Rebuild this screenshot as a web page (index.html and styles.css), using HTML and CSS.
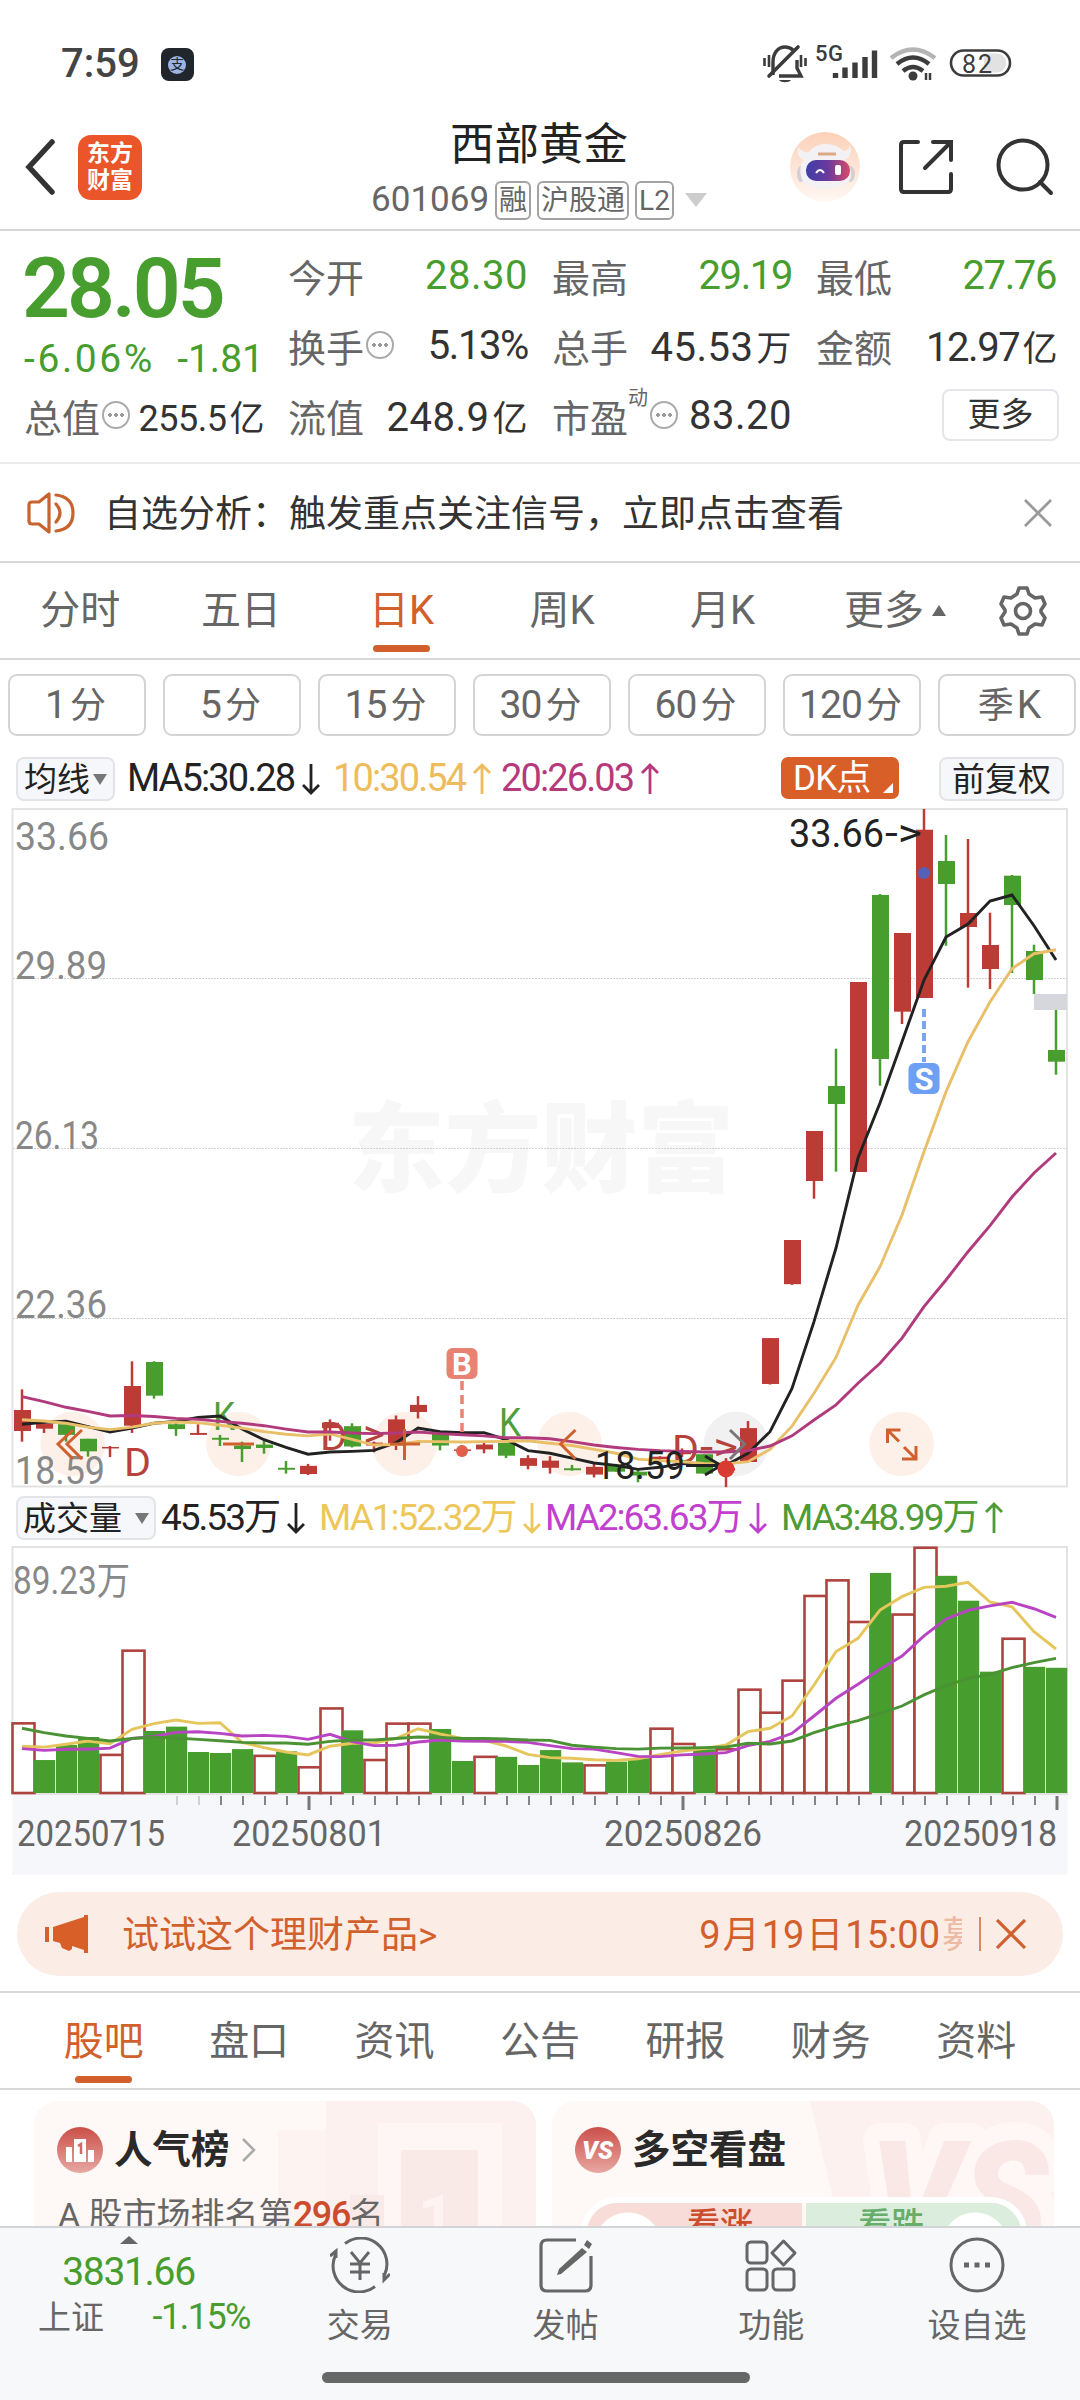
FILE: index.html
```
<!DOCTYPE html>
<html lang="zh-CN">

<head>
  <meta charset="UTF-8">
  <meta name="viewport" content="width=device-width, initial-scale=1.0">
  <title>西部黄金 601069</title>
  <link rel="stylesheet" href="styles.css">
</head>

<body>
  <div class="status-bar">
    <span class="time">7:59</span>
    <span class="status-app"><i>支</i></span>
    <svg class="status-icons" width="256" height="44" viewBox="760 42 256 44" fill="none" stroke="#3c3c3c">
      <path d="M773 75V62c0-9 5-15 12-15 3 0 6 1 8 3M797 60v8l4 8h-22" stroke-width="3.4" />
      <path d="M769 76L798 47" stroke-width="3.6" stroke-linecap="round" />
      <path d="M764.500 58v8M769 55v12M801 55v12M805.500 58v8" stroke-width="2.600" />
      <path d="M779 80h12c-2 3-10 3-12 0z" fill="#3c3c3c" stroke="none" />
      <text x="815" y="61" font-size="22" font-weight="500" fill="#3c3c3c" stroke="none" textLength="28">5G</text>
      <path d="M835.500 73v5M845 67.500v10.500M855 62.500v15.500M865 57v21M874.500 50.500v27.500" stroke-width="5.400" />
      <path d="M891 58q22-17 44 0" stroke="#b4b4b4" stroke-width="4.500" />
      <path d="M897 64q16-13 32 0M903 71q10-8 20 0" stroke-width="4.500" />
      <circle cx="913" cy="76" r="4.500" fill="#3c3c3c" stroke="none" />
      <path d="M926 73v7M930 73v7" stroke-width="2.500" />
      <rect x="951" y="50.500" width="59" height="25" rx="12.500" stroke-width="2.600" />
      <path d="M984 53.500h13c12 0 12 19 0 19h-13z" fill="#e2e2e2" stroke="none" />
      <text x="962" y="72.500" font-size="25" fill="#3c3c3c" stroke="none" textLength="30">82</text>
    </svg>
  </div>

  <header class="header">
    <svg class="back" width="34" height="56" viewBox="0 0 34 56" fill="none" stroke="#333" stroke-width="5.500">
      <path d="M29 3L6 28L29 53" stroke-linecap="round" />
    </svg>
    <div class="logo">东方<br>财富</div>
    <div class="heading">
      <h1>西部黄金</h1>
      <div class="code">
        <span class="num">601069</span>
        <span class="tag">融</span>
        <span class="tag">沪股通</span>
        <span class="tag">L2</span>
        <span class="caret"></span>
      </div>
    </div>
    <svg class="robot" width="70" height="70" viewBox="0 0 70 70">
      <defs>
        <linearGradient id="halo" x1="0" y1="0" x2="0" y2="1">
          <stop offset="0" stop-color="#fbd1b8" />
          <stop offset="1" stop-color="#fff8f3" />
        </linearGradient>
        <linearGradient id="visor">
          <stop offset="0" stop-color="#3d3fa8" />
          <stop offset=".5" stop-color="#6a3a9c" />
          <stop offset="1" stop-color="#d84b68" />
        </linearGradient>
      </defs>
      <circle cx="35" cy="35" r="35" fill="url(#halo)" />
      <ellipse cx="11" cy="42" rx="4" ry="8" fill="#d3cfd4" />
      <ellipse cx="60" cy="42" rx="5" ry="8" fill="#d3cfd4" />
      <path d="M13 28q-7-4-5-13 4 6 11 5 6-8 17-8t17 7q6 0 7-6 4 9-5 15 7 8 6 16-2 13-25 13T11 44q-2-8 2-16z" fill="#f3f1f3" />
      <rect x="16" y="28" width="44" height="21" rx="10" fill="url(#visor)" />
      <path d="M28 22h18" stroke="#dba984" stroke-width="3" />
      <path d="M26 41q4-6 8 0" fill="none" stroke="#fff" stroke-width="2" />
      <rect x="45" y="33" width="6" height="10" rx="2" fill="#fff" />
    </svg>
    <svg class="share" width="56" height="56" viewBox="0 0 56 56" fill="none" stroke="#333" stroke-width="4" stroke-linecap="round">
      <path d="M20 3H6q-3 0-3 3v44q0 3 3 3h44q3 0 3-3V35M35 3h18v18M53 3L27 29" />
    </svg>
    <svg class="search" width="58" height="58" viewBox="0 0 58 58" fill="none" stroke="#333" stroke-width="4">
      <circle cx="27" cy="27" r="24.500" />
      <path d="M44 44l11 11" stroke-linecap="round" />
    </svg>
  </header>

  <section class="quote">
    <div class="col">
      <div class="price">28.05</div>
      <div class="change"><span class="percent">-6.06%</span><span>-1.81</span></div>
      <div class="cell small"><label>总值<i class="more-dot"></i></label><b>255.5<em>亿</em></b></div>
    </div>
    <div class="col">
      <div class="cell down"><label>今开</label><b>28.30</b></div>
      <div class="cell"><label>换手<i class="more-dot"></i></label><b class="tight">5.13%</b></div>
      <div class="cell"><label>流值</label><b>248.9<em>亿</em></b></div>
    </div>
    <div class="col">
      <div class="cell down"><label>最高</label><b class="tight">29.19</b></div>
      <div class="cell"><label>总手</label><b>45.53<em>万</em></b></div>
      <div class="cell"><label>市盈<sup>动</sup><i class="more-dot"></i></label><b>83.20</b></div>
    </div>
    <div class="col">
      <div class="cell down"><label>最低</label><b class="tight">27.76</b></div>
      <div class="cell"><label>金额</label><b class="tight">12.97<em>亿</em></b></div>
      <div class="cell end"><button class="more-btn">更多</button></div>
    </div>
  </section>

  <section class="notice">
    <svg width="48" height="44" viewBox="0 0 48 44" fill="none" stroke="#c9622f" stroke-width="3.200">
      <path d="M22 3v38L12 33H5q-3 0-3-3V14q0-3 3-3h7L22 3z" stroke-linejoin="round" />
      <path d="M29 13q8 9 0 18M29 4q17 2 17 18T29 40" stroke-linecap="round" />
    </svg>
    <p>自选分析：触发重点关注信号，立即点击查看</p>
    <svg width="28" height="28" viewBox="0 0 28 28" stroke="#999" stroke-width="2.800">
      <path d="M1 1l26 26M27 1L1 27" />
    </svg>
  </section>

  <nav class="period">
    <a>分时</a>
    <a>五日</a>
    <a class="active">日K</a>
    <a>周K</a>
    <a>月K</a>
    <a class="wide">更多<i class="up"></i></a>
    <svg class="gear" width="48" height="50" viewBox="0 0 48 50" fill="none" stroke="#666" stroke-width="3.600" stroke-linejoin="round">
      <path d="M20 2h8l2 6 6 4 7-1 3 7-4 6v2l4 6-3 7-7-1-6 4-2 6h-8l-2-6-6-4-7 1-3-7 4-6v-2l-4-6 3-7 7 1 6-4z" />
      <circle cx="24" cy="25" r="7.500" />
    </svg>
  </nav>

  <div class="minutes">
    <button>1<span>分</span></button>
    <button>5<span>分</span></button>
    <button>15<span>分</span></button>
    <button>30<span>分</span></button>
    <button>60<span>分</span></button>
    <button>120<span>分</span></button>
    <button><span>季</span>K</button>
  </div>

  <div class="legend">
    <span class="chip ma-chip">均线<i class="tri"></i></span>
    <span class="ma5">MA5:30.28<svg class="arrow" viewBox="0 0 20 32"><path d="M10 1v29M2 22l8 8 8-8" /></svg></span>
    <span class="ma10">10:30.54<svg class="arrow" viewBox="0 0 20 32"><path d="M10 31V2M2 10l8-8 8 8" /></svg></span>
    <span class="ma20">20:26.03<svg class="arrow" viewBox="0 0 20 32"><path d="M10 31V2M2 10l8-8 8 8" /></svg></span>
    <span class="dk">DK点<i></i></span>
    <span class="chip adjust">前复权</span>
  </div>

  <svg class="chart" id="kline" width="1080" height="687" viewBox="0 808 1080 687"></svg>

  <div class="legend volume-legend">
    <span class="chip vol-chip">成交量<i class="tri"></i></span>
    <span class="vol0">45.53万<svg class="arrow" viewBox="0 0 20 32"><path d="M10 1v29M2 22l8 8 8-8" /></svg></span>
    <span class="vol1">MA1:52.32万<svg class="arrow" viewBox="0 0 20 32"><path d="M10 1v29M2 22l8 8 8-8" /></svg></span>
    <span class="vol2">MA2:63.63万<svg class="arrow" viewBox="0 0 20 32"><path d="M10 1v29M2 22l8 8 8-8" /></svg></span>
    <span class="vol3">MA3:48.99万<svg class="arrow" viewBox="0 0 20 32"><path d="M10 31V2M2 10l8-8 8 8" /></svg></span>
  </div>

  <svg class="chart" id="volume" width="1080" height="329" viewBox="0 1546 1080 329"></svg>

  <div class="banner">
    <svg width="44" height="38" viewBox="0 0 44 38" fill="#d95f28">
      <path d="M0 12h4v15H0zM8 12L39 2V0h4v38h-4v-3L27 31v3l-3 2-7-3-2-5-7-2z" />
    </svg>
    <span class="product">试试这个理财产品&gt;</span>
    <span class="deadline"><b>9</b>月<b>19</b>日<b>15:00</b><span class="fade">募</span></span>
    <i class="sep"></i>
    <svg width="30" height="30" viewBox="0 0 30 30" stroke="#d0602e" stroke-width="3.200">
      <path d="M1 1l28 28M29 1L1 29" />
    </svg>
  </div>

  <nav class="tabs">
    <a class="active">股吧</a>
    <a>盘口</a>
    <a>资讯</a>
    <a>公告</a>
    <a>研报</a>
    <a>财务</a>
    <a>资料</a>
  </nav>

  <section class="cards">
    <div class="card">
      <svg class="card-art" width="502" height="136" viewBox="0 0 502 136">
        <path d="M244 29h48v107h-48z" fill="#fdf4f2" />
        <path d="M292 0h210v136H292z" fill="#fcf1ef" />
        <path d="M344 22h124v114H344z" fill="#fdf6f4" />
        <path d="M367 49h77v87h-77z" fill="#f9e9e7" />
        <path d="M316 94h34v42h-34z" fill="#f9e9e7" />
        <text x="384" y="140" font-size="64" font-weight="700" fill="#fdf4f2">1</text>
      </svg>
      <h3>
        <svg width="46" height="46" viewBox="0 0 46 46">
          <defs>
            <linearGradient id="badge" x1="0" y1="0" x2="0" y2="1">
              <stop offset="0" stop-color="#cb4f49" />
              <stop offset="1" stop-color="#e8a7a2" />
            </linearGradient>
          </defs>
          <circle cx="23" cy="23" r="23" fill="url(#badge)" />
          <path d="M9 20h6v15H9zM17 12h12v23H17zM31 23h6v12h-6z" fill="#fff" />
          <path d="M21 19l3-2v10" fill="none" stroke="#d46a64" stroke-width="2.500" />
        </svg>
        人气榜
        <svg width="16" height="24" viewBox="0 0 16 24" fill="none" stroke="#aaa" stroke-width="2.500"><path d="M2 1l11 11L2 23" /></svg>
      </h3>
      <p class="rank">A<span> 股市场排名第</span><b>296</b>名</p>
    </div>
    <div class="card">
      <svg class="card-art" width="502" height="136" viewBox="0 0 502 136">
        <path d="M258 0h244v136H290z" fill="#fcf1ef" />
        <text x="318" y="152" font-size="158" font-weight="900" font-style="italic" fill="#f9e8e6" stroke="#fef7f5" stroke-width="36" stroke-linejoin="round" paint-order="stroke" textLength="178" lengthAdjust="spacingAndGlyphs">VS</text>
      </svg>
      <h3>
        <svg width="46" height="46" viewBox="0 0 46 46">
          <circle cx="23" cy="23" r="23" fill="url(#badge)" />
          <text x="7" y="32" font-size="25" font-weight="900" font-style="italic" fill="#fff" textLength="31" lengthAdjust="spacingAndGlyphs">VS</text>
        </svg>
        多空看盘
      </h3>
      <div class="vote">
        <div class="rise">看涨</div>
        <div class="fall">看跌</div>
      </div>
    </div>
  </section>

  <footer class="bottom">
    <div class="items">
      <div class="index">
        <i class="up"></i>
        <div class="points">3831.66</div>
        <div class="row"><span>上证</span><span class="pct">-1.15%</span></div>
      </div>
      <div class="item">
        <svg viewBox="0 0 60 56" fill="none" stroke="#666" stroke-width="3">
          <path d="M15 6.500A26 26 0 0 1 54.500 38M45 49.500A26 26 0 0 1 5.500 18M0 19l6-5v7M60 37l-6 6v-7" />
          <path d="M21 15l9 11 9-11M30 26v17M20 27h20M20 35h20" />
        </svg>
        交易
      </div>
      <div class="item">
        <svg viewBox="0 0 60 56" fill="none" stroke="#666" stroke-width="3.200">
          <path d="M40 3H11q-6 0-6 6v39q0 6 6 6h38q6 0 6-6V19" />
          <path d="M51 3l5 4-3 5-5-4zM46 11l5 4-26 22-4 1 2-6z" fill="#666" stroke="none" />
        </svg>
        发帖
      </div>
      <div class="item">
        <svg viewBox="0 0 60 56" fill="none" stroke="#666" stroke-width="3">
          <rect x="6" y="5" width="20" height="21" rx="4" />
          <rect x="6" y="32" width="20" height="21" rx="4" />
          <rect x="32" y="32" width="21" height="21" rx="4" />
          <path d="M42.500 4L54 16 42.500 28 31 16z" stroke-linejoin="round" />
        </svg>
        功能
      </div>
      <div class="item">
        <svg viewBox="0 0 60 56" fill="none" stroke="#666" stroke-width="3">
          <circle cx="30" cy="28" r="26" />
          <path d="M17 28h5M27.500 28h5M38 28h5" stroke-width="5" />
        </svg>
        设自选
      </div>
    </div>
    <div class="home-bar"></div>
  </footer>

  <script src="chart.js"></script>
</body>

</html>
```

FILE: styles.css
```
:root {
  --green: #479d2d;
  --red: #bd3b35;
  --orange: #d2602c;
  --text: #333;
  --gray: #666;
}

* {
  box-sizing: border-box;
}

body {
  margin: 0;
  width: 1080px;
  height: 2400px;
  overflow: hidden;
  display: flex;
  flex-direction: column;
  font-family: Roboto, "Noto Sans CJK SC", sans-serif;
  color: var(--text);
  background: #fff;
}

body > * {
  flex-shrink: 0;
}

i, em {
  font-style: normal;
}

button {
  font-family: inherit;
  padding: 0;
  background: #fff;
}

.status-bar {
  height: 118px;
  padding: 42px 64px 0 61px;
  display: flex;
  align-items: flex-start;
}

.time {
  font-size: 40px;
  line-height: 44px;
  font-weight: 500;
  color: #444;
}

.status-app {
  width: 33px;
  height: 33px;
  margin: 6px 0 0 21px;
  border-radius: 8px;
  background: #20262b;
  display: flex;
  align-items: center;
  justify-content: center;
}

.status-app i {
  width: 18px;
  height: 18px;
  border-radius: 50%;
  background: #9cb4e4;
  color: #20262b;
  font-size: 14px;
  line-height: 17px;
  text-align: center;
}

.status-icons {
  margin-left: auto;
}

.header {
  height: 113px;
  padding: 0 26px 0 23px;
  border-bottom: 2px solid #d6d6d6;
  display: flex;
  align-items: flex-start;
}

.back {
  margin-top: 21px;
}

.logo {
  width: 64px;
  height: 65px;
  margin: 17px 0 0 21px;
  padding-top: 5px;
  border-radius: 13px;
  background: #ea5529;
  color: #fff;
  font-size: 23px;
  line-height: 27px;
  font-weight: 700;
  text-align: center;
}

.heading {
  flex: 1;
  padding-left: 146px;
  display: flex;
  flex-direction: column;
  align-items: center;
}

.heading h1 {
  margin: 0;
  font-size: 44.5px;
  line-height: 54px;
  font-weight: 400;
  color: #222;
}

.code {
  display: flex;
  align-items: center;
  gap: 6px;
  margin-top: 8px;
  font-size: 35px;
  line-height: 40px;
  color: var(--gray);
}

.tag {
  height: 39px;
  padding: 0 2px;
  border: 2px solid #a2a2a2;
  border-radius: 6px;
  font-size: 28px;
  line-height: 35px;
}

.caret {
  margin-left: 5px;
  border: 11px solid transparent;
  border-top: 14px solid #ccc;
  border-bottom: 0;
}

.robot {
  margin-top: 14px;
}

.share {
  margin: 21px 0 0 38px;
}

.search {
  margin: 20px 0 0 42px;
}

.quote {
  height: 233px;
  padding: 9px 24px 0;
  border-bottom: 2px solid #ececec;
  display: grid;
  grid-template-columns: repeat(4, 240px);
  gap: 24px;
}

.price {
  height: 92px;
  line-height: 97px;
  margin-left: -2px;
  font-size: 84px;
  font-weight: 600;
  letter-spacing: -3px;
  color: var(--green);
}

.change {
  height: 48px;
  line-height: 55px;
  font-size: 39px;
  display: flex;
  justify-content: space-between;
  color: var(--green);
}

.percent {
  letter-spacing: 2.6px;
}

.cell {
  height: 70px;
  display: flex;
  align-items: center;
  justify-content: space-between;
  font-size: 40px;
  white-space: nowrap;
}

.cell label {
  display: flex;
  align-items: center;
  font-size: 38px;
  color: var(--gray);
}

.cell b {
  font-weight: 400;
  letter-spacing: 0.5px;
}

.cell b.tight {
  letter-spacing: -1.4px;
}

.cell em {
  margin-left: 3px;
  font-size: 35px;
}

.cell.small b {
  font-size: 36px;
  letter-spacing: -0.5px;
}

.cell.down b {
  color: var(--green);
}

.cell.end {
  justify-content: flex-end;
}

.cell sup {
  align-self: flex-start;
  font-size: 20px;
  line-height: 20px;
}

.more-dot {
  width: 28px;
  height: 28px;
  margin-left: 2px;
  border: 2px solid #aaa;
  border-radius: 50%;
  background: radial-gradient(circle, #999 1.6px, transparent 2px) center / 6px 24px no-repeat,
    radial-gradient(circle, #999 1.6px, transparent 2px) 3px center / 6px 24px no-repeat,
    radial-gradient(circle, #999 1.6px, transparent 2px) 15px center / 6px 24px no-repeat;
}

.more-btn {
  width: 117px;
  height: 52px;
  margin-right: -3px;
  border: 2px solid #e4e6ea;
  border-radius: 8px;
  font-size: 33px;
  line-height: 46px;
  color: var(--text);
}

.notice {
  height: 99px;
  padding: 0 28px 0 27px;
  border-bottom: 2px solid #d8d8d8;
  display: flex;
  align-items: center;
}

.notice p {
  flex: 1;
  margin: 0 0 4px 29px;
  font-size: 37px;
}

.period {
  height: 97px;
  border-bottom: 2px solid #d8d8d8;
  display: flex;
  align-items: center;
  font-size: 40px;
  color: var(--gray);
}

.period a {
  width: 160.6px;
  height: 95px;
  line-height: 96px;
  text-align: center;
  display: flex;
  flex-direction: column;
  align-items: center;
}

.period a.wide {
  width: 184px;
  flex-direction: row;
  justify-content: center;
  gap: 8px;
}

.gear {
  margin-left: 12px;
}

.period a.active,
.tabs a.active {
  color: var(--orange);
}

.period a.active::after,
.tabs a.active::after {
  content: "";
  width: 57px;
  height: 7px;
  margin-top: -14px;
  border-radius: 4px;
  background: var(--orange);
}

.up {
  border: 7px solid transparent;
  border-bottom: 11px solid #666;
  border-top: 0;
}

.minutes {
  padding: 14px 5px 0 8px;
  height: 96px;
  display: grid;
  grid-template-columns: repeat(7, 138px);
  column-gap: 17px;
}

.minutes button {
  height: 62px;
  border: 2px solid #d4d4d4;
  border-radius: 9px;
  font-size: 39px;
  line-height: 56px;
  letter-spacing: -1px;
  color: var(--gray);
}

.minutes span {
  margin: 0 4px;
  font-size: 36px;
}

.legend {
  height: 52px;
  display: flex;
  align-items: flex-start;
  padding: 1px 16px 0;
  font-size: 38px;
  line-height: 43px;
  letter-spacing: -1.9px;
  white-space: nowrap;
}

.legend > span {
  display: flex;
  align-items: center;
}

.chip {
  height: 44px;
  border: 2px solid #e2e4e8;
  border-radius: 8px;
  background: #f6f7fa;
  color: #222;
  justify-content: center;
  font-size: 33px;
  line-height: 39px;
  letter-spacing: 0;
}

.tri {
  margin-left: 3px;
  border: 7px solid transparent;
  border-top: 11px solid #777;
  border-bottom: 0;
}

.arrow {
  flex-shrink: 0;
  width: 20px;
  height: 34px;
  margin-left: 7px;
  fill: none;
  stroke: currentColor;
  stroke-width: 2.8;
}

.ma-chip {
  width: 99px;
}

.ma5 {
  width: 206px;
  padding-left: 12px;
  color: #222;
}

.ma10 {
  width: 168px;
  padding-left: 12px;
  color: #edbc5c;
}

.ma20 {
  padding-left: 12px;
  color: #b6397c;
}

.dk {
  width: 118px;
  height: 42px;
  margin-left: auto;
  padding-left: 12px;
  border-radius: 7px;
  background: #d95f28;
  color: #fff;
  font-size: 35px;
  letter-spacing: -0.8px;
}

.dk i {
  align-self: flex-end;
  margin: 0 0 6px 12px;
  border: 5px solid #fff;
  border-top-color: transparent;
  border-left-color: transparent;
}

.adjust {
  width: 125px;
  margin-left: 40px;
}

.volume-legend {
  height: 51px;
  font-size: 37px;
  letter-spacing: -2px;
}

.volume-legend .chip {
  letter-spacing: 0;
}

.vol-chip {
  width: 140px;
}

.vol-chip .tri {
  margin-left: 13px;
}

.vol0 {
  width: 163px;
  padding-left: 5px;
  color: #222;
}

.vol1 {
  width: 226px;
  color: #edc75a;
}

.vol2 {
  width: 236px;
  color: #c140cf;
}

.vol3 {
  color: #4f9b35;
}

.chart {
  display: block;
}

.chart text {
  font-size: 38px;
}

.chart .scale {
  fill: #888;
}

.chart .date {
  font-size: 36px;
  fill: #666;
}

.chart .note {
  fill: #222;
}

.chart .watermark {
  font-size: 98px;
  font-weight: 900;
  fill: #f7f7f7;
}

.banner {
  height: 84px;
  margin: 17px 17px 15px;
  padding: 0 37px 0 28px;
  border-radius: 42px;
  background: #fbece5;
  color: var(--orange);
  display: flex;
  align-items: center;
  font-size: 37px;
}

.product {
  flex: 1;
  margin: 0 0 5px 33px;
}

.deadline {
  margin-bottom: 5px;
}

.deadline b {
  margin: 0 2px;
  font-size: 38px;
  font-weight: 400;
}

.fade {
  display: inline-block;
  width: 20px;
  overflow: hidden;
  vertical-align: bottom;
  opacity: 0.35;
}

.sep {
  width: 2px;
  height: 34px;
  margin: 0 15px 0 17px;
  background: #d98a64;
}

.tabs {
  height: 99px;
  padding: 0 31px;
  border-top: 2px solid #d8d8d8;
  border-bottom: 2px solid #d8d8d8;
  display: flex;
  font-size: 40px;
  color: var(--gray);
}

.tabs a {
  flex: 1;
  line-height: 97px;
  display: flex;
  flex-direction: column;
  align-items: center;
}

.cards {
  height: 136px;
  padding: 11px 26px 0 34px;
  overflow: hidden;
  display: grid;
  grid-template-columns: 502px 502px;
  gap: 16px;
}

.card {
  position: relative;
  height: 260px;
  padding: 25px 23px;
  border-radius: 24px;
  background: #fef8f6;
  overflow: hidden;
}

.card-art {
  position: absolute;
  top: 0;
  left: 0;
}

.card h3 {
  position: relative;
  margin: 0;
  height: 50px;
  display: flex;
  align-items: center;
  gap: 11px;
  font-size: 38.500px;
  line-height: 46px;
  padding-bottom: 2px;
  font-weight: 700;
  color: #2a2a2a;
}

.rank {
  position: relative;
  margin: 14px 0 0 1px;
  font-size: 34px;
  line-height: 50px;
  color: var(--gray);
}

.rank b {
  font-size: 36px;
  font-weight: 500;
  letter-spacing: -1.3px;
  color: #cc4d2d;
}

.vote {
  position: relative;
  height: 72px;
  margin: 21px 4px 0 6px;
  border: 6px solid #fff;
  border-radius: 36px;
  display: flex;
  gap: 4px;
  overflow: hidden;
  font-size: 33px;
  line-height: 44px;
  font-weight: 500;
}

.rise,
.fall {
  width: 217px;
  background: radial-gradient(circle at 41px 43px, #fff 33px, transparent 34px) #f8dcd8;
  padding-left: 100px;
  color: #cc4d2d;
}

.fall {
  padding-left: 52px;
  background: radial-gradient(circle at 169px 43px, #fff 33px, transparent 34px) #dbeedd;
  color: #67ad6c;
}

.bottom {
  height: 174px;
  border-top: 2px solid #d2d4d8;
  background: #f7f8fa;
}

.items {
  height: 144px;
  display: grid;
  grid-template-columns: 257px repeat(4, 205.7px);
}

.item {
  padding-top: 9px;
  display: flex;
  flex-direction: column;
  align-items: center;
  gap: 7px;
  font-size: 33px;
  line-height: 52px;
  color: var(--gray);
}

.item svg {
  width: 60px;
  height: 56px;
}

.index {
  display: flex;
  flex-direction: column;
  align-items: center;
  padding-top: 8px;
}

.index .up {
  border-width: 0 9px 8px;
}

.points {
  margin-top: 5px;
  font-size: 39px;
  line-height: 46px;
  letter-spacing: -1.3px;
  color: var(--green);
}

.row {
  width: 212px;
  margin-left: 31px;
  display: flex;
  justify-content: space-between;
  font-size: 33px;
  line-height: 45px;
  color: var(--gray);
}

.pct {
  font-size: 36px;
  letter-spacing: -1.5px;
  color: var(--green);
}

.home-bar {
  width: 428px;
  height: 11px;
  margin: 0 auto;
  transform: translateX(-4px);
  border-radius: 6px;
  background: #666867;
}
```

FILE: chart.js
```
const GREEN = '#479d2d';
const RED = '#bd3b35';
const X0 = 22;
const STEP = 22;

// [color, high, body top, body bottom, low]
const candles = [
  ['r', 1393, 1414.3, 1436, 1447], ['r', 1425, 1428.4, 1433.6, 1438], ['g', 1429, 1429, 1440, 1447],
  ['g', 1444, 1444, 1457, 1462.5], ['r', 1451.5, 1452.5, 1454, 1463], ['r', 1364, 1389.5, 1430.5, 1438],
  ['g', 1364, 1364.7, 1399.5, 1402.6], ['g', 1427, 1429, 1434, 1441], ['r', 1429, 1438, 1440, 1440],
  ['g', 1440, 1443, 1445, 1451.5], ['g', 1447, 1451, 1454.6, 1468], ['g', 1446, 1450, 1453.5, 1459.4],
  ['g', 1467, 1474, 1476, 1480], ['r', 1470, 1472, 1480.4, 1481.5], ['r', 1424, 1427.5, 1433, 1446],
  ['g', 1428, 1431, 1452, 1453], ['r', 1447, 1448, 1451, 1458], ['r', 1420, 1424, 1451, 1455.6],
  ['r', 1400, 1409, 1416.4, 1423], ['g', 1439, 1439, 1451, 1456], ['r', 1450.5, 1455, 1456.5, 1462.5],
  ['r', 1448, 1450, 1455, 1459], ['g', 1448, 1448.4, 1461.5, 1464], ['r', 1461, 1464, 1472, 1475.6],
  ['r', 1462, 1466.6, 1474, 1480], ['g', 1471, 1474.5, 1476.5, 1477], ['r', 1469, 1473, 1481, 1484],
  ['g', 1470, 1470.5, 1478, 1478], ['g', 1475, 1478, 1482, 1489], ['r', 1462, 1462.5, 1465, 1469],
  ['r', 1454, 1458, 1460, 1463], ['g', 1460, 1460, 1480, 1480], ['r', 1464, 1474, 1477, 1494],
  ['r', 1425.7, 1433, 1468, 1468], ['r', 1340, 1340, 1387.4, 1388], ['r', 1240, 1240, 1284.3, 1285],
  ['r', 1131, 1131, 1181, 1198.7], ['g', 1048.7, 1086, 1104, 1171.7], ['r', 982, 982, 1172, 1172],
  ['g', 894, 895, 1059, 1085.7], ['r', 933, 933, 1011.7, 1024], ['r', 809, 829.7, 998, 998],
  ['g', 835, 861, 884, 945.7], ['r', 839, 913, 927, 987.7], ['r', 912.7, 945, 969, 989],
  ['g', 875, 875.7, 905, 973], ['g', 944.7, 951, 980, 994], ['g', 1010, 1050, 1061.7, 1074.7]
];

const ma5 = [1429, 1427, 1426, 1431.5, 1437, 1433, 1428, 1426, 1422, 1420.5, 1434, 1445, 1453, 1460, 1457.7, 1457, 1456, 1448, 1433, 1436.7, 1437.7, 1437.7, 1445, 1456.3, 1459, 1464, 1469, 1471.5, 1475.6, 1473.5, 1469.5, 1471.5, 1471.5, 1459, 1436.7, 1392, 1323, 1248, 1158, 1103, 1041.7, 980, 937, 924, 901, 895, 925.7, 960];
const ma10 = [1424.3, 1425.7, 1428, 1432, 1434.6, 1432, 1428, 1426.7, 1427.4, 1430, 1433, 1436.7, 1439.4, 1441, 1439, 1444.6, 1450.5, 1450, 1446.7, 1447, 1447.4, 1447, 1446.7, 1446, 1448.7, 1451, 1455, 1459, 1465, 1466.6, 1467.7, 1469.4, 1470, 1467.7, 1455, 1431, 1397, 1360, 1306, 1266.7, 1215, 1151.7, 1091.7, 1041.7, 1002, 968.7, 953.7, 949.7];
const ma20 = [1400.5, 1405.7, 1411.5, 1415.7, 1420.5, 1420, 1421, 1423, 1424, 1426, 1428, 1430.5, 1434, 1437, 1437, 1438, 1438.7, 1438, 1437, 1438.7, 1439.8, 1441, 1443, 1443, 1444, 1447, 1450.5, 1453, 1455, 1456.3, 1457, 1457.7, 1457.7, 1456.3, 1451.5, 1441, 1424.6, 1409, 1386.7, 1366, 1340, 1307.5, 1280, 1251.7, 1225.7, 1197, 1173, 1153];

const volumes = [1731.4, 1769.3, 1753.8, 1745.5, 1764, 1656.3, 1739.3, 1734.8, 1761, 1762, 1758, 1765, 1760.3, 1776.8, 1716, 1738.6, 1769.3, 1731.7, 1731.7, 1737.2, 1770.3, 1766, 1766, 1774.4, 1759, 1771.7, 1774.8, 1771, 1767.5, 1736.9, 1752.7, 1758.2, 1758.2, 1696.6, 1720.4, 1687.3, 1599.8, 1583.7, 1626.7, 1576, 1619, 1550, 1579, 1604.7, 1678, 1644, 1673, 1674];
const volumeColors = 'rgggrrggggg' + 'rgrrgrrrggrgg' + 'ggrggrrgrrrrrrrgrrgggrgg';
const vma1 = [1755, 1756, 1753, 1749.6, 1752.4, 1737.6, 1731.7, 1728, 1731.4, 1730.7, 1751, 1756.5, 1761, 1764, 1755, 1752, 1751.7, 1747, 1737, 1742.4, 1747, 1749, 1754.8, 1763.4, 1766.8, 1767.5, 1769, 1769.6, 1768, 1763.7, 1760, 1757.5, 1753.8, 1740, 1736.5, 1723.8, 1691.8, 1657.3, 1643.6, 1614.3, 1600.5, 1590.9, 1589.8, 1585.7, 1606, 1610.9, 1636.7, 1654.6];
const vma2 = [1757.5, 1759.3, 1758.2, 1758.2, 1757, 1746.9, 1745, 1740.7, 1740, 1741.7, 1744.5, 1743.8, 1744.8, 1747.9, 1742.7, 1750.3, 1754.4, 1754, 1750.7, 1748.6, 1749.6, 1750, 1750, 1751, 1754.4, 1757.5, 1758, 1761.7, 1765.5, 1765.8, 1764, 1763, 1761.7, 1754.4, 1750, 1741.7, 1723.8, 1705.5, 1691, 1675.6, 1661.8, 1641, 1623.6, 1614.6, 1610, 1606.4, 1613, 1622];
const vma3 = [1736.5, 1741, 1744.5, 1746.9, 1749.6, 1747, 1745.8, 1746.5, 1748, 1749.3, 1751, 1751.7, 1751.7, 1753, 1750, 1748.6, 1748.6, 1747, 1745.5, 1746, 1747, 1747, 1747.6, 1748.6, 1749, 1754, 1756, 1757.5, 1758, 1757, 1756.9, 1756.5, 1755.8, 1752, 1752.7, 1749.6, 1741, 1734, 1728.6, 1721, 1713.5, 1702, 1692.5, 1685, 1680.8, 1673.9, 1668.7, 1664.2];

// the plots are slightly flattened below these levels
const priceY = y => y > 1280 ? 1280 + (y - 1280) * 0.968 : y;
const volumeY = y => 1480 + (y - 1480) * 0.968;

const line = (values, color, scale) =>
  `<polyline points="${values.map((y, i) => `${X0 + STEP * i},${scale(y)}`).join(' ')}" fill="none" stroke="${color}" stroke-width="2.9"/>`;

const text = (x, y, str, width, cls, color) =>
  `<text x="${x}" y="${y}" textLength="${width}" lengthAdjust="spacingAndGlyphs" class="${cls}"${color ? ` fill="${color}"` : ''}>${str}</text>`;

function drawKline() {
  let s = '';

  // round control buttons under the candles
  [72.7, 238.5, 404.5, 569.5, 736, 901.6].forEach((x, i) => {
    s += `<circle cx="${x}" cy="1444" r="32.3" fill="${i === 4 ? '#f1f1f1' : '#fcf0e9'}"/>`;
  });

  s += text(348, 1184, '东方财富', 386, 'watermark');
  s += '<rect x="12.500" y="809" width="1054.500" height="677.500" fill="none" stroke="#e3e3e3" stroke-width="2"/>';
  [978.5, 1148.5, 1318.5].forEach(y => {
    s += `<path d="M13 ${y}H1067" stroke="#d0d0d0" stroke-dasharray="2 1"/>`;
  });

  s += text(15, 850, '33.66', 94, 'scale');
  s += text(15, 979, '29.89', 92, 'scale');
  s += text(15, 1149, '26.13', 84, 'scale');
  s += text(15, 1318, '22.36', 92, 'scale');
  s += text(15, 1484, '18.59', 90, 'scale');

  candles.forEach(([c, ...levels], i) => {
    const [high, top, bottom, low] = levels.map(priceY);
    const x = X0 + STEP * i;
    const color = c === 'g' ? GREEN : RED;
    s += `<path d="M${x} ${high}V${low}" stroke="${color}" stroke-width="2.5"/>`;
    s += `<rect x="${x - 8}" y="${top}" width="17" height="${bottom - top}" fill="${color}"/>`;
  });

  s += '<rect x="1034" y="994" width="33" height="16" fill="#d5d7dc"/>';
  s += '<circle cx="924" cy="873" r="6" fill="#5560b8"/>';

  s += text(213, 1430, 'K', 22, '', '#4f9e3a') + text(499, 1436, 'K', 22, '', '#4f9e3a');
  s += text(124, 1476, 'D', 27, '', '#b5423b');
  s += text(320, 1450, 'D', 27, '', '#b5423b') + text(363, 1447, '&gt;', 22, '', '#b5423b');
  s += text(672, 1463, 'D', 27, '', '#b5423b') + text(700, 1460, '-&gt;', 38, '', '#b5423b');

  s += line(ma5, '#222', priceY) + line(ma10, '#e9bf69', priceY) + line(ma20, '#b13a7d', priceY);

  s += text(789, 847, '33.66', 95, 'note') + text(885, 846, '-&gt;', 37, 'note');
  s += text(595, 1479, '18.59', 90, 'note') + '<path d="M686 1465.500h34M705 1456l16 9.500-16 9.500" fill="none" stroke="#222" stroke-width="2.800"/>';
  s += '<circle cx="726" cy="1469" r="8.500" fill="#d93a32"/>';
  s += '<circle cx="462" cy="1451" r="6" fill="#e0604c"/>';

  // buy / sell markers
  s += '<path d="M462 1381V1434" stroke="#e98272" stroke-width="3.500" stroke-dasharray="9 5"/>';
  s += '<rect x="446.500" y="1348" width="31" height="31" rx="6" fill="#e98272"/>';
  s += '<text x="462" y="1375" text-anchor="middle" style="font-size:31px;font-weight:700" fill="#fff">B</text>';
  s += '<path d="M924 1009V1062" stroke="#77a5ee" stroke-width="4" stroke-dasharray="8 4"/>';
  s += '<rect x="908.500" y="1063" width="31" height="31" rx="6" fill="#6d9ff4"/>';
  s += '<text x="924" y="1090" text-anchor="middle" style="font-size:31px;font-weight:700" fill="#fff">S</text>';

  s += `<g fill="none" stroke="#d0602e" stroke-width="3">
    <path d="M73 1430L58 1444L73 1459M82 1430L67 1444L82 1459"/>
    <path d="M223 1444h31M390 1444h30M404.500 1429v31"/>
    <path d="M575.500 1430L560.700 1444L575.500 1459"/>
    <path d="M730 1430L744.500 1444L730 1459" stroke="#777"/>
    <path d="M887.500 1443v-13h13M888 1430.500l11 11M916 1446v13h-14M915 1458l-11-11"/>
  </g>`;

  document.getElementById('kline').innerHTML = s;
}

function drawVolume() {
  const base = 1793;
  let s = '<rect x="12" y="1795" width="1055.500" height="80" fill="#f6f7fa"/>';
  s += '<rect x="12.500" y="1547" width="1054.500" height="247" fill="none" stroke="#e3e3e3" stroke-width="2"/>';
  s += text(13, 1594, '89.23万', 117, 'scale');

  volumes.forEach((value, i) => {
    const x = X0 + STEP * i;
    const top = volumeY(value);
    if (volumeColors[i] === 'g') {
      s += `<rect x="${x - 10}" y="${top}" width="21.200" height="${base - top}" fill="${GREEN}"/>`;
    } else {
      s += `<rect x="${x - 9.5}" y="${top}" width="22" height="${base - top}" fill="#fff" stroke="#ad443f" stroke-width="2.600"/>`;
    }
  });
  s += line(vma1, '#e6c65c', volumeY) + line(vma2, '#b844c4', volumeY) + line(vma3, '#4b9234', volumeY);

  for (let i = 7; i < 48; i++) {
    const x = X0 + STEP * i + 1;
    const major = i === 13 || i === 30 || i === 47;
    s += `<path d="M${x} 1796V${major ? 1810 : 1805}" stroke="${i < 9 ? '#ccc' : '#777'}" stroke-width="${major ? 3 : 1.8}"/>`;
  }

  s += text(17, 1846, '20250715', 148, 'date');
  s += text(232, 1846, '20250801', 154, 'date');
  s += text(604, 1846, '20250826', 158, 'date');
  s += text(904, 1846, '20250918', 153, 'date');
  document.getElementById('volume').innerHTML = s;
}

drawKline();
drawVolume();
```
